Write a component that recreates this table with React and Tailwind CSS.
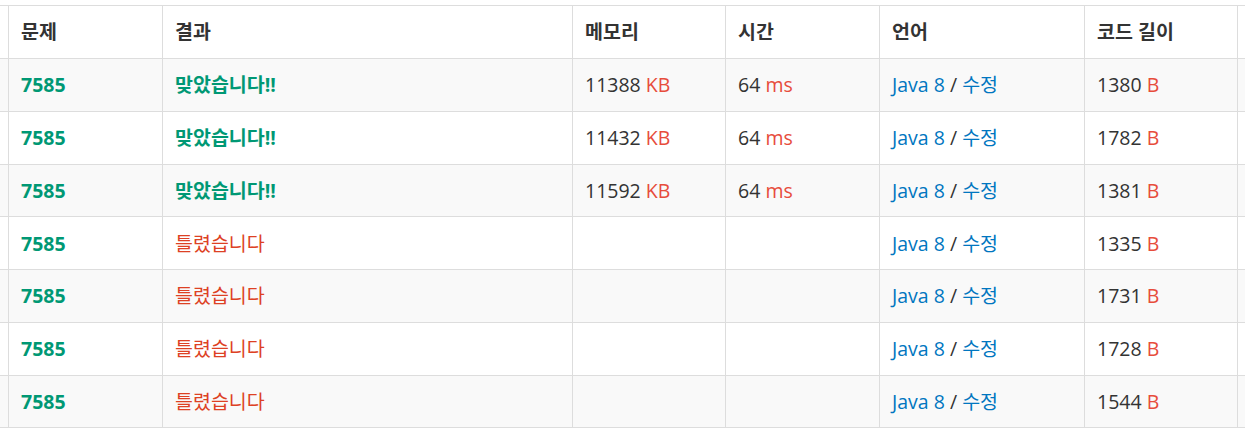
import React from 'react';

const rows = [
    { id: '7585', ok: true, memory: '11388', time: '64', len: '1380' },
    { id: '7585', ok: true, memory: '11432', time: '64', len: '1782' },
    { id: '7585', ok: true, memory: '11592', time: '64', len: '1381' },
    { id: '7585', ok: false, len: '1335' },
    { id: '7585', ok: false, len: '1731' },
    { id: '7585', ok: false, len: '1728' },
    { id: '7585', ok: false, len: '1544' },
];

const gridCols = 'grid grid-cols-[9px_154px_410px_153px_154px_205px_153px_100px]';
const cell = 'h-full flex items-center px-3 border-r border-[#dddddd] whitespace-nowrap overflow-hidden';
// leftmost column is scrolled off, only its right edge shows
const edge = 'h-full border-r border-[#dddddd]';

const App = () => {
    return (
        <div
            className="w-[1245px] h-[433px] overflow-hidden bg-white pt-[5px] text-[19.5px] text-[#333333]"
            style={{ fontFamily: '"Open Sans", "Noto Sans CJK KR", sans-serif' }}
        >
            <div className="w-[1338px]">
                {/* Header */}
                <div className={`${gridCols} h-[54px] border-y border-[#dddddd] font-bold`}>
                    <div className={edge}></div>
                    <div className={cell}>문제</div>
                    <div className={cell}>결과</div>
                    <div className={cell}>메모리</div>
                    <div className={cell}>시간</div>
                    <div className={cell}>언어</div>
                    <div className={cell}>코드 길이</div>
                    <div className={cell}></div>
                </div>

                {/* Submissions */}
                {rows.map((row, i) => (
                    <div
                        key={i}
                        className={`${gridCols} h-[52.75px] border-b border-[#dddddd] ${i % 2 === 0 ? 'bg-[#f9f9f9]' : 'bg-white'}`}
                    >
                        <div className={edge}></div>
                        <div className={`${cell} font-bold text-[#009874]`}>{row.id}</div>
                        <div className={cell}>
                            {row.ok ? (
                                <span className="font-bold text-[#009874]">맞았습니다!!</span>
                            ) : (
                                <span className="text-[#dd4124]">틀렸습니다</span>
                            )}
                        </div>
                        <div className={cell}>
                            {row.memory && (
                                <span>
                                    {row.memory} <span className="text-[#e74c3c]">KB</span>
                                </span>
                            )}
                        </div>
                        <div className={cell}>
                            {row.time && (
                                <span>
                                    {row.time} <span className="text-[#e74c3c]">ms</span>
                                </span>
                            )}
                        </div>
                        <div className={cell}>
                            <span>
                                <span className="text-[#0076c0]">Java 8</span> / <span className="text-[#0076c0]">수정</span>
                            </span>
                        </div>
                        <div className={cell}>
                            <span>
                                {row.len} <span className="text-[#e74c3c]">B</span>
                            </span>
                        </div>
                        <div className={cell}></div>
                    </div>
                ))}
            </div>
        </div>
    );
};

export default App;
